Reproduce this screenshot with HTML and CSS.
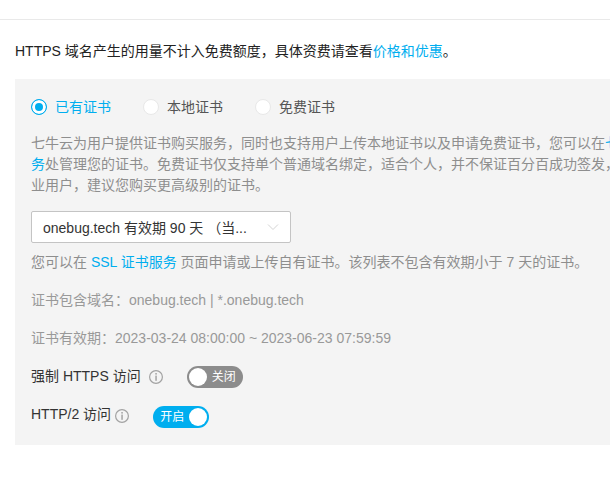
FILE: index.html
```html
<!DOCTYPE html>
<html lang="zh">
<head>
<meta charset="utf-8">
<title>HTTPS</title>
<link rel="stylesheet" href="styles.css">
</head>
<body>
<div class="page">
  <div class="top-rule"></div>
  <p class="notice">HTTPS 域名产生的用量不计入免费额度，具体资费请查看<a href="#">价格和优惠</a>。</p>
  <section class="panel">
    <div class="radios">
      <label class="radio checked"><span class="dot"></span>已有证书</label>
      <label class="radio"><span class="dot"></span>本地证书</label>
      <label class="radio"><span class="dot"></span>免费证书</label>
    </div>
    <p class="desc">七牛云为用户提供证书购买服务，同时也支持用户上传本地证书以及申请免费证书，您可以在<a href="#">七牛云 SSL 证书服<br>务</a>处管理您的证书。免费证书仅支持单个普通域名绑定，适合个人，并不保证百分百成功签发，如果您是企<br>业用户，建议您购买更高级别的证书。</p>
    <div class="select">
      <span class="select-text">onebug.tech 有效期 90 天 （当...</span>
      <svg class="chev" width="12" height="8" viewBox="0 0 12 8"><path d="M1 1.5 L6 6.5 L11 1.5" fill="none" stroke="#d4d4d4" stroke-width="1"/></svg>
    </div>
    <p class="hint">您可以在 <a href="#">SSL 证书服务</a> 页面申请或上传自有证书。该列表不包含有效期小于 7 天的证书。</p>
    <p class="meta domain">证书包含域名：onebug.tech | *.onebug.tech</p>
    <p class="meta expiry">证书有效期：2023-03-24 08:00:00 ~ 2023-06-23 07:59:59</p>
    <div class="setting https">
      <span class="label">强制 HTTPS 访问</span>
      <svg class="info" width="14" height="14" viewBox="0 0 14 14"><circle cx="7" cy="7" r="6.4" fill="none" stroke="#a3a3a3" stroke-width="1.2"/><rect x="6.3" y="3" width="1.5" height="1.6" fill="#a3a3a3"/><rect x="6.3" y="5.6" width="1.5" height="5.2" fill="#a3a3a3"/></svg>
      <span class="switch off"><span class="knob"></span><span class="sw-text">关闭</span></span>
    </div>
    <div class="setting http2">
      <span class="label">HTTP/2 访问</span>
      <svg class="info" width="14" height="14" viewBox="0 0 14 14"><circle cx="7" cy="7" r="6.4" fill="none" stroke="#a3a3a3" stroke-width="1.2"/><rect x="6.3" y="3" width="1.5" height="1.6" fill="#a3a3a3"/><rect x="6.3" y="5.6" width="1.5" height="5.2" fill="#a3a3a3"/></svg>
      <span class="switch on"><span class="sw-text">开启</span><span class="knob"></span></span>
    </div>
  </section>
</div>
</body>
</html>
```
FILE: styles.css
```css
html, body {
  margin: 0;
  padding: 0;
  background: #fff;
  overflow: hidden;
}
.page {
  width: 610px;
  height: 491px;
  overflow: hidden;
  font-family: "Liberation Sans", "Noto Sans CJK SC", sans-serif;
  font-size: 14px;
  color: #333;
}
a {
  color: #00aeef;
  text-decoration: none;
}
p {
  margin: 0;
}
.top-rule {
  height: 1px;
  margin-top: 19px;
  background: #e9e9e9;
}
.notice {
  margin: 21px 0 0 15px;
  line-height: 21px;
  color: #222;
  white-space: nowrap;
}
.panel {
  margin: 17px 0 0 15px;
  width: 760px;
  height: 366px;
  padding: 16px;
  box-sizing: border-box;
  background: #f4f4f4;
}
.radios {
  display: flex;
  height: 24px;
  align-items: center;
}
.radio {
  display: flex;
  align-items: center;
  width: 112px;
  color: #555;
  line-height: 24px;
}
.dot {
  width: 14px;
  height: 14px;
  margin-right: 8px;
  border-radius: 50%;
  background: #fff;
  border: 1px solid #e8e8e8;
  flex: none;
}
.radio.checked {
  color: #00aeef;
}
.radio.checked .dot {
  border-color: #00aeef;
  box-shadow: inset 0 0 0 3px #fff;
  background: #00aeef;
}
.desc {
  margin-top: 14px;
  line-height: 21px;
  color: #8e8e8e;
  white-space: nowrap;
}
.select {
  display: flex;
  align-items: center;
  justify-content: space-between;
  box-sizing: border-box;
  width: 260px;
  height: 32px;
  margin-top: 15px;
  padding: 0 11px;
  background: #fff;
  border: 1px solid #c4c4c4;
  border-radius: 2px;
  color: #333;
}
.select-text {
  white-space: nowrap;
}
.hint {
  margin-top: 9px;
  line-height: 21px;
  color: #8e8e8e;
  white-space: nowrap;
}
.meta {
  line-height: 21px;
  color: #999;
  white-space: nowrap;
}
.domain {
  margin-top: 17px;
}
.expiry {
  margin-top: 17px;
}
.setting {
  display: flex;
  align-items: center;
  height: 24px;
  color: #333;
  white-space: nowrap;
}
.https {
  margin-top: 16px;
}
.https .label {
  margin-bottom: 5px;
}
.https .info {
  margin-bottom: 1px;
}
.http2 {
  margin-top: 16px;
}
.http2 .label {
  margin-bottom: 8px;
}
.http2 .info {
  margin-bottom: 3px;
}
.info {
  margin-left: 8px;
  flex: none;
}
.http2 .info {
  margin-left: 4px;
}
.switch {
  display: inline-flex;
  align-items: center;
  box-sizing: border-box;
  width: 56px;
  height: 22px;
  margin-left: 24px;
  padding: 0 2px;
  border-radius: 11px;
  color: #fff;
  font-size: 12px;
  line-height: 18px;
}
.switch.off {
  background: #8c8c8c;
}
.switch.on {
  background: #00aeef;
  justify-content: space-between;
  padding-left: 7px;
}
.switch.off .sw-text {
  margin-left: 5px;
}
.knob {
  width: 18px;
  height: 18px;
  border-radius: 50%;
  background: #fff;
  flex: none;
}
```
